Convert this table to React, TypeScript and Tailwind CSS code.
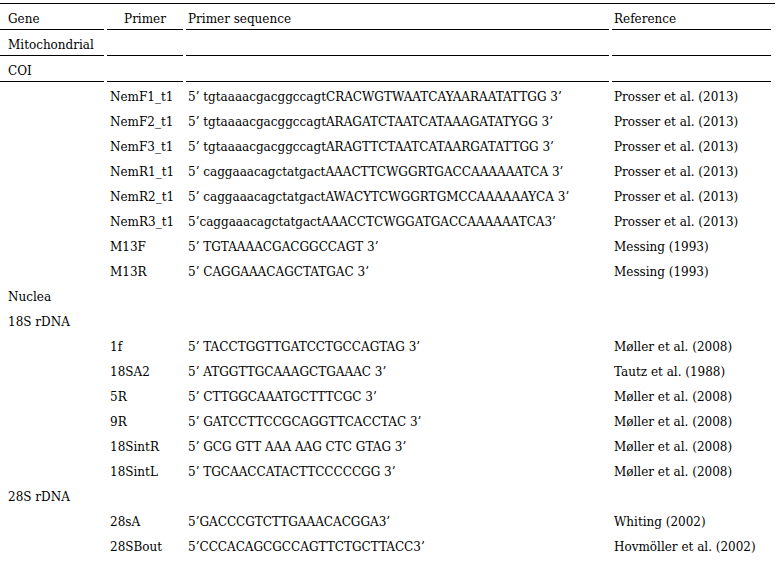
import React from 'react';

type Row = { gene?: string; primer?: string; seq?: string; ref?: string; ruled?: boolean };

const ROWS: Row[] = [
  { gene: 'Mitochondrial', ruled: true },
  { gene: 'COI', ruled: true },
  { primer: 'NemF1_t1', seq: "5’ tgtaaaacgacggccagtCRACWGTWAATCAYAARAATATTGG 3’", ref: 'Prosser et al. (2013)' },
  { primer: 'NemF2_t1', seq: "5’ tgtaaaacgacggccagtARAGATCTAATCATAAAGATATYGG 3’", ref: 'Prosser et al. (2013)' },
  { primer: 'NemF3_t1', seq: "5’ tgtaaaacgacggccagtARAGTTCTAATCATAARGATATTGG 3’", ref: 'Prosser et al. (2013)' },
  { primer: 'NemR1_t1', seq: "5’ caggaaacagctatgactAAACTTCWGGRTGACCAAAAAATCA 3’", ref: 'Prosser et al. (2013)' },
  { primer: 'NemR2_t1', seq: "5’ caggaaacagctatgactAWACYTCWGGRTGMCCAAAAAAYCA 3’", ref: 'Prosser et al. (2013)' },
  { primer: 'NemR3_t1', seq: "5’caggaaacagctatgactAAACCTCWGGATGACCAAAAAATCA3’", ref: 'Prosser et al. (2013)' },
  { primer: 'M13F', seq: "5’ TGTAAAACGACGGCCAGT 3’", ref: 'Messing (1993)' },
  { primer: 'M13R', seq: "5’ CAGGAAACAGCTATGAC 3’", ref: 'Messing (1993)' },
  { gene: 'Nuclea' },
  { gene: '18S rDNA' },
  { primer: '1f', seq: "5’ TACCTGGTTGATCCTGCCAGTAG 3’", ref: 'Møller et al. (2008)' },
  { primer: '18SA2', seq: "5’ ATGGTTGCAAAGCTGAAAC 3’", ref: 'Tautz et al. (1988)' },
  { primer: '5R', seq: "5’ CTTGGCAAATGCTTTCGC 3’", ref: 'Møller et al. (2008)' },
  { primer: '9R', seq: "5’ GATCCTTCCGCAGGTTCACCTAC 3’", ref: 'Møller et al. (2008)' },
  { primer: '18SintR', seq: "5’ GCG GTT AAA AAG CTC GTAG 3’", ref: 'Møller et al. (2008)' },
  { primer: '18SintL', seq: "5’ TGCAACCATACTTCCCCCGG 3’", ref: 'Møller et al. (2008)' },
  { gene: '28S rDNA' },
  { primer: '28sA', seq: "5’GACCCGTCTTGAAACACGGA3’", ref: 'Whiting (2002)' },
  { primer: '28SBout', seq: "5’CCCACAGCGCCAGTTCTGCTTACC3’", ref: 'Hovmöller et al. (2002)' },
];

const cols = 'grid grid-cols-[104px_76px_423px_159px] gap-x-[3px]';

export default function App() {
  return (
    <div className="w-[778px] h-[564px] bg-white text-black text-[12px] leading-none font-['DejaVu_Serif','Liberation_Serif',serif] overflow-hidden">
      <div className="mt-[3px] w-[775px] border-t border-black" />
      <div className={cols}>
        <div className="h-[26px] flex items-center pt-[4px] pl-[8px] border-b border-black">Gene</div>
        <div className="h-[26px] flex items-center pt-[4px] justify-center border-b border-black">Primer</div>
        <div className="h-[26px] flex items-center pt-[4px] pl-[2px] border-b border-black">Primer sequence</div>
        <div className="h-[26px] flex items-center pt-[4px] pl-[2px] border-b border-black">Reference</div>
      </div>
      {ROWS.map((r, i) => (
        <div key={i} className={cols}>
          <div className={`flex items-center pt-[4px] pl-[8px] whitespace-nowrap ${r.ruled ? 'h-[26px] border-b border-black' : 'h-[25px]'}`}>{r.gene}</div>
          <div className={`flex items-center pt-[4px] pl-[3px] whitespace-nowrap ${r.ruled ? 'h-[26px] border-b border-black' : 'h-[25px]'}`}>{r.primer}</div>
          <div className={`flex items-center pt-[4px] pl-[2px] whitespace-nowrap ${r.ruled ? 'h-[26px] border-b border-black' : 'h-[25px]'}`}>{r.seq}</div>
          <div className={`flex items-center pt-[4px] pl-[2px] whitespace-nowrap ${r.ruled ? 'h-[26px] border-b border-black' : 'h-[25px]'}`}>{r.ref}</div>
        </div>
      ))}
    </div>
  );
}
